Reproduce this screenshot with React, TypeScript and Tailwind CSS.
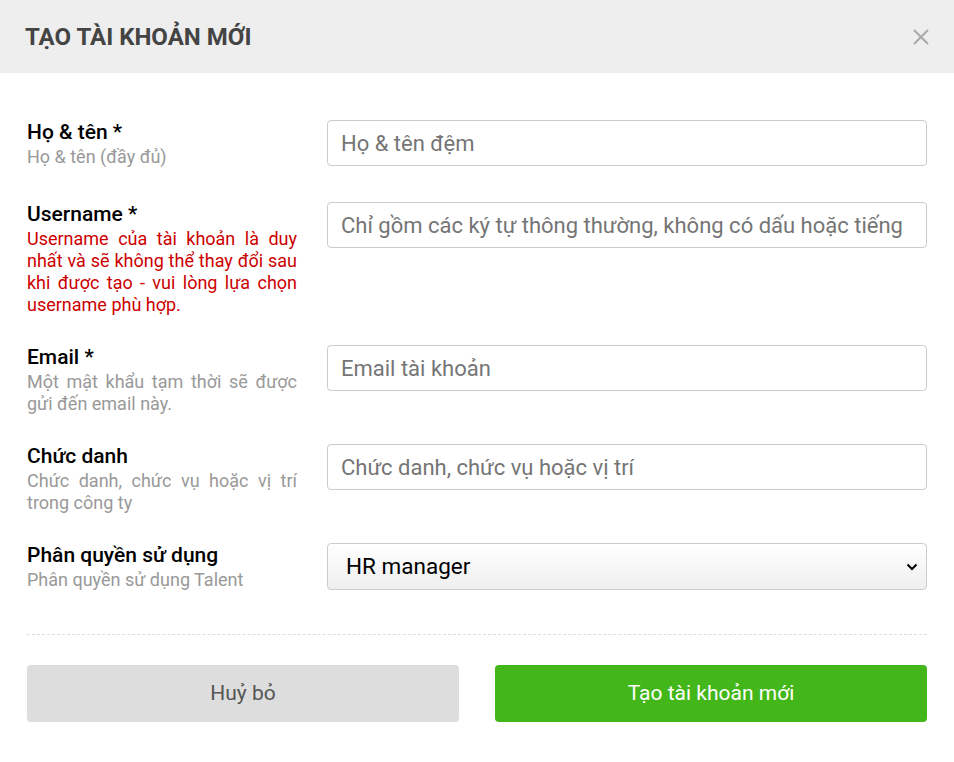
import React from "react";

function Row({
  label,
  sub,
  subClass = "text-[#999]",
  children,
}: {
  label: string;
  sub: string;
  subClass?: string;
  children: React.ReactNode;
}) {
  return (
    <div className="flex items-start gap-[30px]">
      <div className="w-[270px] shrink-0">
        <div className="text-[21px] leading-[28px] font-medium text-black">{label}</div>
        <div className={`text-[18px] leading-[22px] text-justify ${subClass}`}>{sub}</div>
      </div>
      <div className="flex-1 mt-[2px]">{children}</div>
    </div>
  );
}

function Input({ placeholder }: { placeholder: string }) {
  return (
    <input
      type="text"
      placeholder={placeholder}
      className="w-full h-[46px] border border-[#cccccc] rounded-[4px] pl-[13px] pr-[8px] text-[22px] text-black placeholder:text-[#757575] outline-none bg-white"
    />
  );
}

export default function App() {
  return (
    <div className="w-[954px] h-[762px] bg-white font-['Roboto',sans-serif]">
      <div className="h-[73px] bg-[#eeeeee] flex items-center justify-between pl-[25px] pr-[24px]">
        <h1 className="text-[24px] font-bold text-[#444444] uppercase">Tạo tài khoản mới</h1>
        <svg width="18" height="18" viewBox="0 0 18 18" className="text-[#aaaaaa]">
          <path d="M2 2 L16 16 M16 2 L2 16" stroke="currentColor" strokeWidth="2" />
        </svg>
      </div>

      <div className="px-[27px] pt-[45px]">
        <div className="flex flex-col gap-[27px]">
          <div className="mb-[5px]">
            <Row label="Họ & tên *" sub="Họ & tên (đầy đủ)">
              <Input placeholder="Họ & tên đệm" />
            </Row>
          </div>
          <Row
            label="Username *"
            sub="Username của tài khoản là duy nhất và sẽ không thể thay đổi sau khi được tạo - vui lòng lựa chọn username phù hợp."
            subClass="text-[#cc0000]"
          >
            <Input placeholder="Chỉ gồm các ký tự thông thường, không có dấu hoặc tiếng" />
          </Row>
          <Row label="Email *" sub="Một mật khẩu tạm thời sẽ được gửi đến email này.">
            <Input placeholder="Email tài khoản" />
          </Row>
          <Row label="Chức danh" sub="Chức danh, chức vụ hoặc vị trí trong công ty">
            <Input placeholder="Chức danh, chức vụ hoặc vị trí" />
          </Row>
          <Row label="Phân quyền sử dụng" sub="Phân quyền sử dụng Talent">
            <div className="relative">
              <select
                defaultValue="HR manager"
                className="appearance-none w-full h-[47px] border border-[#cccccc] rounded-[4px] pl-[18px] text-[22.5px] text-black bg-gradient-to-b from-white to-[#eeeeee] outline-none"
              >
                <option>HR manager</option>
              </select>
              <svg
                width="12"
                height="8"
                viewBox="0 0 12 8"
                className="absolute right-[9px] top-[20px] pointer-events-none"
              >
                <path d="M1.5 1.5 L6 6 L10.5 1.5" fill="none" stroke="#000" strokeWidth="2" />
              </svg>
            </div>
          </Row>
        </div>

        <div className="mt-[43px] border-t border-dashed border-[#dddddd]" />

        <div className="mt-[30px] flex gap-[36px]">
          <button className="flex-1 h-[57px] rounded-[4px] bg-[#dddddd] text-[21px] text-[#555555]">
            Huỷ bỏ
          </button>
          <button className="flex-1 h-[57px] rounded-[4px] bg-[#43b719] text-[21px] text-white">
            Tạo tài khoản mới
          </button>
        </div>
      </div>
    </div>
  );
}
